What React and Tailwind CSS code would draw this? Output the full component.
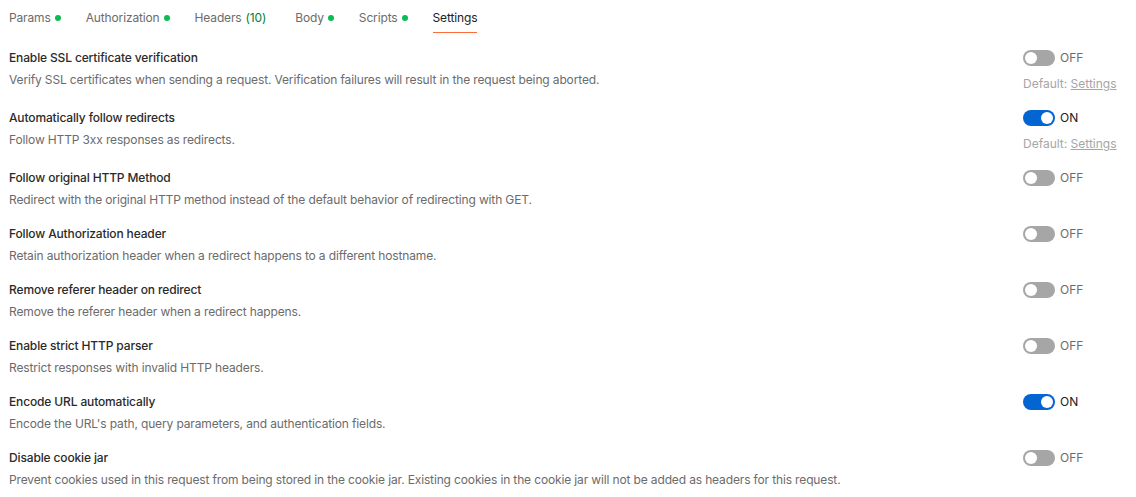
import { useState } from "react";

const tabs = [
  { label: "Params", dot: true },
  { label: "Authorization", dot: true },
  { label: "Headers", count: "(10)" },
  { label: "Body", dot: true },
  { label: "Scripts", dot: true },
  { label: "Settings", active: true },
];

const settings = [
  {
    title: "Enable SSL certificate verification",
    desc: "Verify SSL certificates when sending a request. Verification failures will result in the request being aborted.",
    on: false,
    showDefault: true,
  },
  {
    title: "Automatically follow redirects",
    desc: "Follow HTTP 3xx responses as redirects.",
    on: true,
    showDefault: true,
  },
  {
    title: "Follow original HTTP Method",
    desc: "Redirect with the original HTTP method instead of the default behavior of redirecting with GET.",
    on: false,
  },
  {
    title: "Follow Authorization header",
    desc: "Retain authorization header when a redirect happens to a different hostname.",
    on: false,
  },
  {
    title: "Remove referer header on redirect",
    desc: "Remove the referer header when a redirect happens.",
    on: false,
  },
  {
    title: "Enable strict HTTP parser",
    desc: "Restrict responses with invalid HTTP headers.",
    on: false,
  },
  {
    title: "Encode URL automatically",
    desc: "Encode the URL's path, query parameters, and authentication fields.",
    on: true,
  },
  {
    title: "Disable cookie jar",
    desc: "Prevent cookies used in this request from being stored in the cookie jar. Existing cookies in the cookie jar will not be added as headers for this request.",
    on: false,
  },
];

const Toggle = ({ on, onClick }) => (
  <button onClick={onClick} className="flex items-center gap-[5px] h-4">
    <span
      className={`w-8 h-4 rounded-full p-[2px] flex ${
        on ? "bg-[#0265d2] justify-end" : "bg-[#a6a6a6] justify-start"
      }`}
    >
      <span className="w-3 h-3 rounded-full bg-white" />
    </span>
    <span className={on ? "text-[#212121]" : "text-[#6b6b6b]"}>
      {on ? "ON" : "OFF"}
    </span>
  </button>
);

const SettingRow = ({ item }) => {
  const [on, setOn] = useState(item.on);

  return (
    <div className="flex justify-between py-[9px]">
      <div className="flex flex-col gap-[6px]">
        <span className="leading-4 font-medium text-[#2a2a2a]">{item.title}</span>
        <span className="leading-4 text-[#6b6b6b]">{item.desc}</span>
      </div>
      <div className="w-[93px] shrink-0 flex flex-col gap-[10px] leading-4 tracking-normal">
        <Toggle on={on} onClick={() => setOn(!on)} />
        {item.showDefault && (
          <span className="text-[#a6a6a6] whitespace-nowrap">
            Default: <span className="underline">Settings</span>
          </span>
        )}
      </div>
    </div>
  );
};

const App = () => {
  return (
    <div className="w-[1136px] min-h-[497px] bg-white text-[12px] tracking-[-0.14px] font-['Inter',sans-serif]">
      <div className="flex pl-[9px] gap-[25px]">
        {tabs.map((tab) => (
          <div
            key={tab.label}
            className={`flex items-center gap-1 h-[33px] pt-[4px] border-b ${
              tab.active
                ? "border-[#ff6c37] text-[#212121]"
                : "border-transparent text-[#6b6b6b]"
            } ${tab.count ? "pr-[4px]" : ""}`}
          >
            <span>{tab.label}</span>
            {tab.count && <span className="text-[#007f31]">{tab.count}</span>}
            {tab.dot && <span className="w-[6px] h-[6px] rounded-full bg-[#0cbb52]" />}
          </div>
        ))}
      </div>
      <div className="mt-[8px] pl-[9px] pr-[20px]">
        {settings.map((item) => (
          <SettingRow key={item.title} item={item} />
        ))}
      </div>
    </div>
  );
};

export default App;
